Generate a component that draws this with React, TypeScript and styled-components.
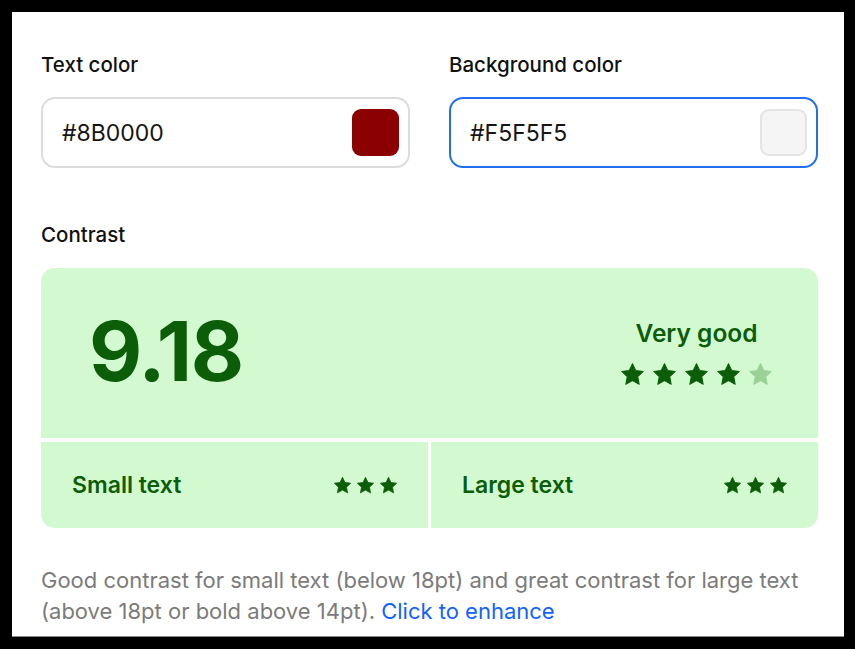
import React, { useState } from 'react';
import styled, { createGlobalStyle } from 'styled-components';

const GlobalStyle = createGlobalStyle`
    html, body {
        margin: 0;
        padding: 0;
        background: #000;
        font-family: Inter, "Noto Sans", sans-serif;
    }
    body {
        height: 649px;
        overflow: hidden;
    }
`;

const Panel = styled.div`
    margin: 12px;
    width: 832px;
    height: 625px;
    box-sizing: border-box;
    background: #fff;
    border-bottom: 1px solid #8a8a8a;
    padding: 42px 26px 0 29px;
    display: flex;
    flex-direction: column;
`;

const ColorRow = styled.div`
    display: grid;
    grid-template-columns: 369px 369px;
    column-gap: 39px;
`;

const Field = styled.div`
    display: flex;
    flex-direction: column;
`;

const Label = styled.div`
    font-size: 20.5px;
    font-weight: 500;
    line-height: 22px;
    color: #111;
`;

const InputBox = styled.div<{ $focused?: boolean }>`
    margin-top: 21px;
    height: 71px;
    box-sizing: border-box;
    border: 2px solid ${p => (p.$focused ? '#1f6fef' : '#dcdcdc')};
    border-radius: 14px;
    display: flex;
    align-items: center;
    justify-content: space-between;
    padding: 0 9px 0 19px;
`;

const HexInput = styled.input`
    border: none;
    outline: none;
    background: transparent;
    font-family: Inter, "Noto Sans", sans-serif;
    font-size: 23px;
    color: #151515;
    width: 200px;
    padding: 0;
`;

const Swatch = styled.div<{ $color: string }>`
    width: 47px;
    height: 47px;
    box-sizing: border-box;
    border-radius: 9px;
    background: ${p => p.$color};
    border: ${p => (p.$color === '#F5F5F5' ? '2px solid #e4e4e4' : 'none')};
`;

const SectionLabel = styled(Label)`
    margin-top: 56px;
`;

const Result = styled.div`
    margin-top: 22px;
    display: grid;
    grid-template-columns: 1fr 1fr;
    grid-template-rows: 170px 86px;
    gap: 4px 3px;
    border-radius: 14px;
    overflow: hidden;
    background: #fff;
`;

const Cell = styled.div`
    background: #d3f9d1;
    color: #0b5e07;
    display: flex;
    align-items: center;
    justify-content: space-between;
`;

const ScoreCell = styled(Cell)`
    grid-column: 1 / 3;
    padding: 0 45px 0 48px;
`;

const Score = styled.div`
    font-size: 82px;
    font-weight: 700;
    letter-spacing: -1.5px;
    line-height: 1;
    margin-top: -2px;
`;

const Rating = styled.div`
    display: flex;
    flex-direction: column;
    align-items: center;
    gap: 15px;
    margin-top: -1px;
`;

const RatingText = styled.div`
    font-size: 24.5px;
    font-weight: 600;
    line-height: 28px;
`;

const Stars = styled.div<{ $gap: number }>`
    display: flex;
    gap: ${p => p.$gap}px;
`;

const SubCell = styled(Cell)`
    padding: 0 30px 0 31px;
`;

const SubTitle = styled.div`
    font-size: 23px;
    font-weight: 600;
    line-height: 26px;
`;

const Note = styled.p`
    margin: 37px 0 0;
    font-size: 22px;
    line-height: 31px;
    color: #7b7b7b;
`;

const Link = styled.a`
    color: #0f63ff;
    text-decoration: none;
    cursor: pointer;
`;

const Star = ({ size, faded }: { size: number; faded?: boolean }) => (
    <svg width={size} height={size} viewBox="0 0 24 24">
        <path
            d="M12 1.6l3.1 6.6 7.2.9-5.3 5 1.4 7.2L12 17.8l-6.4 3.5 1.4-7.2-5.3-5 7.2-.9z"
            fill={faded ? '#9bd197' : '#0b5e07'}
            strokeLinejoin="round"
            stroke={faded ? '#9bd197' : '#0b5e07'}
            strokeWidth="1"
        />
    </svg>
);

const App = () => {
    const [textColor, setTextColor] = useState('#8B0000');
    const [bgColor, setBgColor] = useState('#F5F5F5');

    return (
        <>
            <GlobalStyle />
            <Panel>
                <ColorRow>
                    <Field>
                        <Label>Text color</Label>
                        <InputBox>
                            <HexInput value={textColor} onChange={e => setTextColor(e.target.value)} />
                            <Swatch $color="#8B0000" />
                        </InputBox>
                    </Field>
                    <Field>
                        <Label>Background color</Label>
                        <InputBox $focused>
                            <HexInput value={bgColor} onChange={e => setBgColor(e.target.value)} />
                            <Swatch $color="#F5F5F5" />
                        </InputBox>
                    </Field>
                </ColorRow>

                <SectionLabel>Contrast</SectionLabel>
                <Result>
                    <ScoreCell>
                        <Score>9.18</Score>
                        <Rating>
                            <RatingText>Very good</RatingText>
                            <Stars $gap={7}>
                                {[0, 1, 2, 3, 4].map(i => (
                                    <Star key={i} size={25} faded={i === 4} />
                                ))}
                            </Stars>
                        </Rating>
                    </ScoreCell>
                    <SubCell>
                        <SubTitle>Small text</SubTitle>
                        <Stars $gap={4}>
                            {[0, 1, 2].map(i => <Star key={i} size={19} />)}
                        </Stars>
                    </SubCell>
                    <SubCell>
                        <SubTitle>Large text</SubTitle>
                        <Stars $gap={4}>
                            {[0, 1, 2].map(i => <Star key={i} size={19} />)}
                        </Stars>
                    </SubCell>
                </Result>

                <Note>
                    Good contrast for small text (below 18pt) and great contrast for large text
                    (above 18pt or bold above 14pt). <Link>Click to enhance</Link>
                </Note>
            </Panel>
        </>
    );
};

export default App;
